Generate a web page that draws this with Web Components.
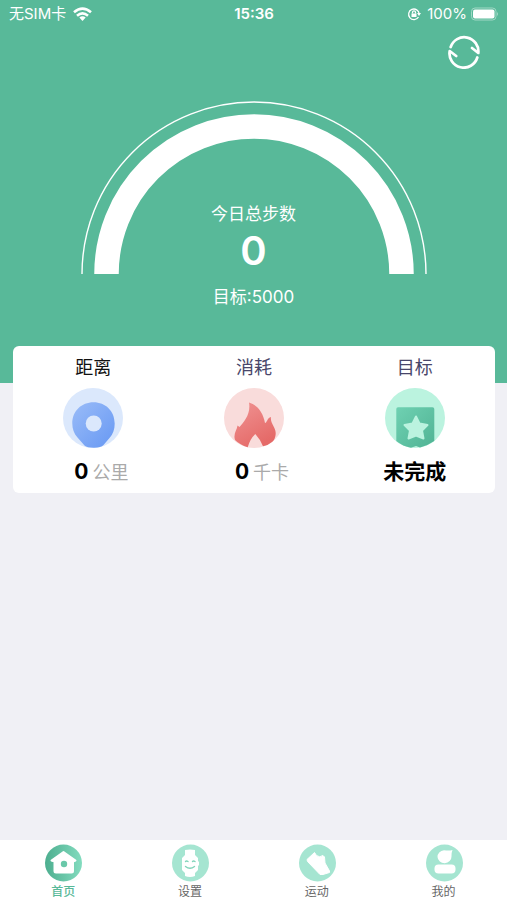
<!DOCTYPE html>
<html lang="zh-CN">
<head>
<meta charset="utf-8">
<meta name="viewport" content="width=device-width, initial-scale=1">
<title>今日总步数</title>
<style>
body { margin: 0; font-family: Inter, "Noto Sans CJK SC", sans-serif; background: #f0f0f5; }
</style>
</head>
<body>
<step-app></step-app>

<template id="t-app">
<style>
:host { display: flex; flex-direction: column; min-height: 100vh; }
main { flex: 1; }
.hero { background: #58b999; color: #fff; padding-bottom: 74px; }
.tools { display: flex; justify-content: flex-end; padding: 7px 26px 0 0; }
button { border: 0; padding: 0; background: none; color: inherit; display: block; width: 34px; height: 34px; cursor: pointer; }
button svg { display: block; width: 34px; height: 34px; }
.card { display: grid; grid-template-columns: repeat(3, 1fr); background: #fff; border-radius: 6px; margin: -37px 12px 0 13px; }
nav { display: grid; grid-template-columns: repeat(4, 1fr); background: #fff; }
</style>
<main>
  <section class="hero">
    <status-bar></status-bar>
    <div class="tools">
      <button type="button" aria-label="同步">
        <svg viewBox="0 0 34 34" fill="none" stroke="#fff" stroke-width="2.7" stroke-linecap="round" stroke-linejoin="round"><path d="M3.700 12A14.200 14.200 0 0 1 31.300 18L25 13"/><path d="M30.300 22.500A14.200 14.200 0 0 1 2.700 16L9.200 21"/></svg>
      </button>
    </div>
    <step-gauge><span slot="label">今日总步数</span><span slot="count">0</span><span slot="goal">目标:5000</span></step-gauge>
  </section>
  <section class="card">
    <stat-item style="--title:#111">
      <span slot="title">距离</span>
      <svg slot="icon" viewBox="0 0 60 60" width="60" height="60"><defs><linearGradient id="b" x2="1" y2="1"><stop stop-color="#9abcf8"/><stop offset="1" stop-color="#6798f3"/></linearGradient></defs><circle cx="30" cy="30" r="30" fill="#dbe8fc"/><path fill="url(#b)" d="M30.500 14.300C42.500 14.300 51.700 23 51.700 35.500C51.700 41.500 50 46 46.500 50L40.500 57Q38 59.700 31 59.700Q24 59.700 21.500 57.500L14.500 49.500C11 45.500 9.300 41 9.300 35.500C9.300 23 18.500 14.300 30.500 14.300Z"/><circle cx="30.700" cy="35.500" r="8" fill="#dbe8fc"/></svg>
      <b slot="value">0</b><span slot="unit">公里</span>
    </stat-item>
    <stat-item>
      <span slot="title">消耗</span>
      <svg slot="icon" viewBox="0 0 60 60" width="60" height="60"><defs><linearGradient id="r" x2=".5" y2="1"><stop stop-color="#f09393"/><stop offset="1" stop-color="#e56a68"/></linearGradient></defs><circle cx="30" cy="30" r="30" fill="#f9dcdb"/><path fill="url(#r)" d="M25 14.500C33 17 39 24 41 35C43 35 43 30 47 29C46 35 51.700 39 51.700 45C51.700 49 50 53 48 54Q44 57.500 39 58.300Q36 51 31.300 46Q26 51 23.700 59.300Q16 57 11 52C9 46 13 42 13.500 37.500L15.500 39C20 34 27 26 25 14.500Z"/></svg>
      <b slot="value">0</b><span slot="unit">千卡</span>
    </stat-item>
    <stat-item>
      <span slot="title">目标</span>
      <svg slot="icon" viewBox="0 0 60 60" width="60" height="60"><defs><linearGradient id="g" x2="1" y2="1"><stop stop-color="#6fd1b2"/><stop offset="1" stop-color="#50b394"/></linearGradient></defs><circle cx="30" cy="30" r="30" fill="#bbf3df"/><path fill="url(#g)" d="M13 19.300H47.500Q49.300 19.300 49.300 21V53Q42 58 35 59.500L31 58L26 59.700Q18 58.500 11.300 53V21Q11.300 19.300 13 19.300Z"/><path fill="#bbf3df" stroke="#bbf3df" stroke-width="2" stroke-linejoin="round" d="M31 28.500L34.500 35.500L42.500 37L37 42.500L38.500 50.500L31 47.500L23.500 50.500L25 42.500L19.500 37L27.500 35.500Z"/></svg>
      <b slot="value">未完成</b>
    </stat-item>
  </section>
</main>
<nav aria-label="主导航">
  <tab-link active><svg slot="icon" viewBox="0 0 38 38" width="38" height="38"><defs><linearGradient id="h" x2="1"><stop stop-color="#4dae8f"/><stop offset="1" stop-color="#83dcbf"/></linearGradient></defs><circle cx="19.500" cy="19" r="18.500" fill="url(#h)"/><path fill="#fff" stroke="#fff" stroke-width="2" stroke-linejoin="round" d="M19.500 8L31.500 16.500L29 17.500V27Q29 28.500 27.500 28.500H12Q10.500 28.500 10.500 27V17.500L7.500 16.500Z"/><circle cx="20" cy="20" r="3.200" fill="#69c8a9"/></svg>首页</tab-link>
  <tab-link><svg slot="icon" viewBox="0 0 38 38" width="38" height="38"><circle cx="19.500" cy="19" r="18.500" fill="#a5e5d1"/><path fill="#fff" d="M14 6Q19 5 24 6V11L27 14V17L28 18V21L27 22V26L24 29V32Q19 34 14 32V29L11 26V14L14 11Z"/><path fill="none" stroke="#82d4ba" stroke-width="1.400" stroke-linecap="round" d="M14.500 17.500Q15.500 16.500 17 17.500M21.500 17.500Q22.500 16.500 24 17.500M14.500 22.500Q19 26 23.500 22.500"/></svg>设置</tab-link>
  <tab-link><svg slot="icon" viewBox="0 0 38 38" width="38" height="38"><circle cx="19.500" cy="19" r="18.500" fill="#a5e5d1"/><path fill="#fff" stroke="#fff" stroke-linejoin="round" d="M16.500 8.500L18.500 11.500Q21.500 14 25 11.500L26.500 13L27 19L31.500 27V28.500L25 30.500H22L9.500 17.500L9 15.500Z"/></svg>运动</tab-link>
  <tab-link><svg slot="icon" viewBox="0 0 38 38" width="38" height="38"><circle cx="19.500" cy="19" r="18.500" fill="#a5e5d1"/><path fill="#fff" d="M27.500 6Q26.500 8 26.500 12.500A7 6.500 0 1 1 19 6.200Q24 7 27.500 6Z"/><rect x="9.500" y="20.500" width="21" height="9" rx="4" fill="#fff"/></svg>我的</tab-link>
</nav>
</template>

<template id="t-status">
<style>
:host { display: grid; grid-template-columns: 1fr auto 1fr; align-items: center; height: 28px; padding: 0 8px 0 9px; font-size: 15px; line-height: 20px; }
div { display: flex; align-items: center; gap: 7px; }
.end { justify-content: flex-end; gap: 4px; }
.lock { margin-right: 2px; }
time { font-weight: 600; }
svg { display: block; }
</style>
<div><span>无SIM卡</span><svg width="19" height="14" viewBox="0 0 19 14" fill="none" stroke="#fff" stroke-width="2.600"><path d="M1 5.200Q9.500-2 18 5.200M4 8.700Q9.500 4 15 8.700"/><path fill="#fff" stroke="none" d="M6.300 10.500Q9.500 8 12.700 10.500L9.500 14Z"/></svg></div>
<time>15:36</time>
<div class="end"><svg class="lock" width="14" height="14" viewBox="0 0 14 14" fill="none" stroke="#fff" stroke-width="1.300"><path d="M11.500 10A5.300 5.300 0 1 1 12.200 7"/><path fill="#fff" stroke="none" d="M10 6H14L12 9ZM4.500 6.500H9.500V10H4.500Z"/><path d="M5.500 6.500V5.300A1.500 1.500 0 0 1 8.500 5.300V6.500"/></svg><span>100%</span><svg width="28" height="14" viewBox="0 0 28 14"><rect x=".5" y="1" width="24.500" height="12" rx="3.500" fill="none" stroke="#a0d8c5"/><rect x="2" y="2.500" width="21.500" height="9" rx="2" fill="#fff"/><path fill="#a0d8c5" d="M26 5Q28 7 26 9Z"/></svg></div>
</template>

<template id="t-gauge">
<style>
:host { display: grid; justify-content: center; grid-template-columns: minmax(0, 346px); margin-top: 32px; }
svg { grid-area: 1 / 1; display: block; width: 100%; }
.text { grid-area: 1 / 1; padding-top: 101px; display: flex; flex-direction: column; align-items: center; font-size: 17px; line-height: 24px; }
.count { font-size: 40px; line-height: 50px; font-weight: 600; }
.goal { margin-top: 9px; }
</style>
<svg viewBox="0 0 346 173" fill="none" stroke="#fff" aria-hidden="true"><path stroke-width="1.400" d="M1 173A172 172 0 0 1 345 173"/><path stroke-width="24.500" d="M25.500 173A147.500 147.500 0 0 1 320.500 173"/></svg>
<div class="text"><slot name="label"></slot><span class="count"><slot name="count"></slot></span><span class="goal"><slot name="goal"></slot></span></div>
</template>

<template id="t-stat">
<style>
:host { display: flex; flex-direction: column; align-items: center; padding: 9px 0 6px; }
.title { color: var(--title, #48466a); font-size: 18px; line-height: 26px; margin-bottom: 7px; }
.value { display: flex; align-items: baseline; gap: 4px; margin-top: 10px; font-size: 21px; line-height: 28px; color: #000; }
:host(.has-unit) .value { padding-left: 16px; }
::slotted(b) { font-weight: 700; }
::slotted([slot="unit"]) { color: #aaa; font-size: 18px; }
::slotted(svg) { display: block; }
</style>
<span class="title"><slot name="title"></slot></span><slot name="icon"></slot>
<span class="value"><slot name="value"></slot><slot name="unit"></slot></span>
</template>

<template id="t-tab">
<style>
:host { display: block; color: #666; }
:host([active]) { color: #58b999; font-weight: 500; }
a { display: flex; flex-direction: column; align-items: center; gap: 2px; color: inherit; text-decoration: none; font-size: 12px; line-height: 16px; padding-top: 4px; }
::slotted(svg) { display: block; }
</style>
<a href="#"><slot name="icon"></slot><span><slot></slot></span></a>
</template>

<script>
class TemplateElement extends HTMLElement {
  constructor() {
    super();
    this.attachShadow({ mode: "open" }).append(
      document.getElementById(this.constructor.template).content.cloneNode(true));
  }
}
class StatusBar extends TemplateElement { static template = "t-status"; }
class StepGauge extends TemplateElement { static template = "t-gauge"; }
class StatItem extends TemplateElement {
  static template = "t-stat";
  connectedCallback() {
    this.classList.toggle("has-unit", !!this.querySelector('[slot="unit"]'));
  }
}
class TabLink extends TemplateElement {
  static template = "t-tab";
  connectedCallback() {
    if (this.hasAttribute("active")) this.shadowRoot.querySelector("a").setAttribute("aria-current", "page");
  }
}
class StepApp extends TemplateElement { static template = "t-app"; }
customElements.define("status-bar", StatusBar);
customElements.define("step-gauge", StepGauge);
customElements.define("stat-item", StatItem);
customElements.define("tab-link", TabLink);
customElements.define("step-app", StepApp);
</script>
</body>
</html>
